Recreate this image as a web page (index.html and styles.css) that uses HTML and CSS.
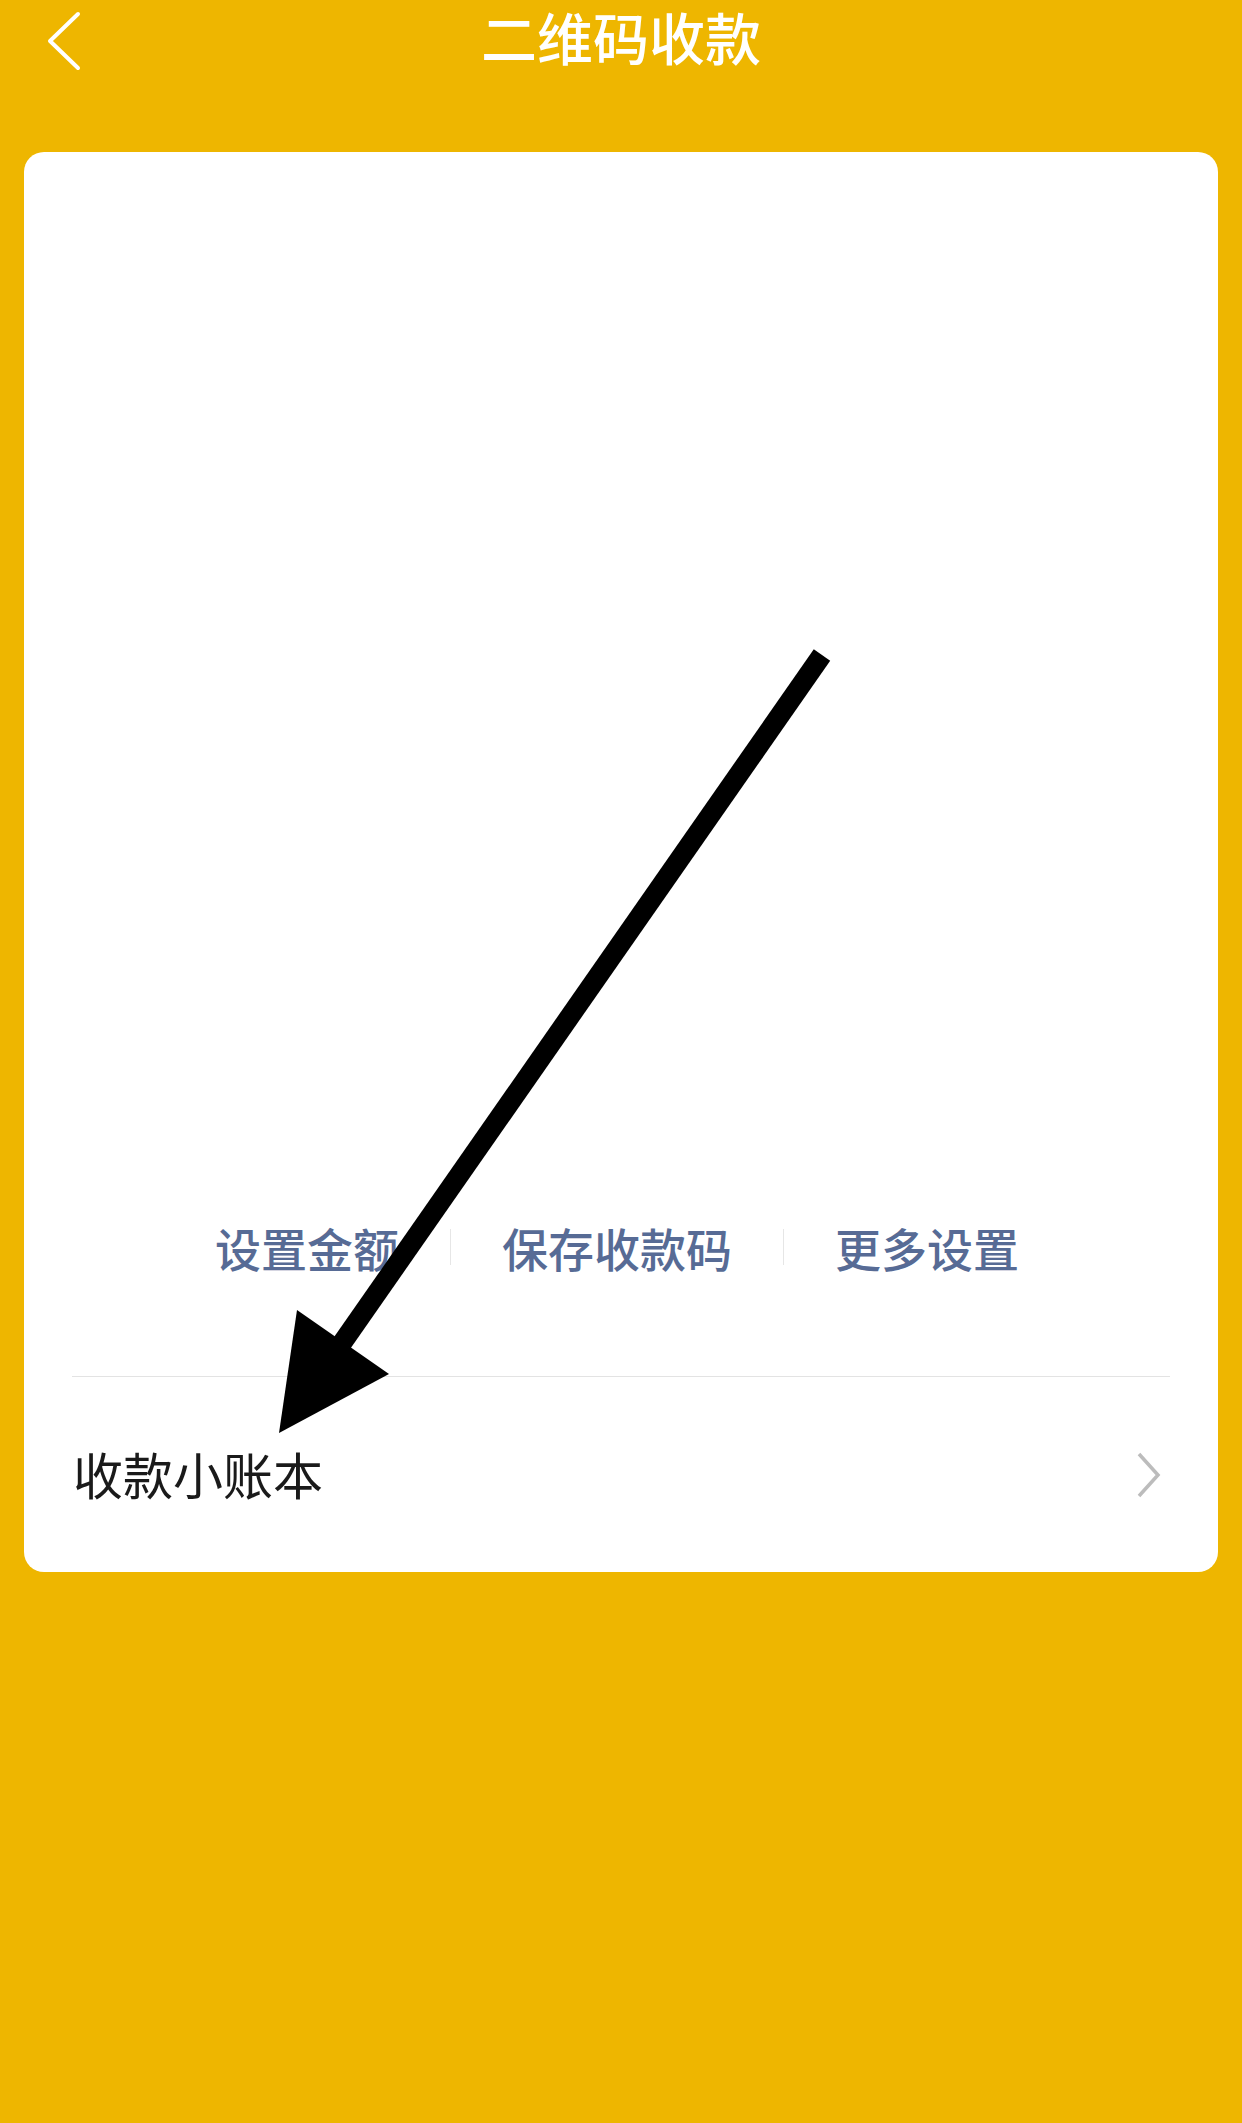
FILE: index.html
```html
<!DOCTYPE html>
<html lang="zh-CN">
<head>
<meta charset="utf-8">
<title>二维码收款</title>
<link rel="stylesheet" href="styles.css">
</head>
<body>
<div class="page">
  <header class="topbar">
    <div class="back">
      <svg width="36" height="60" viewBox="0 0 36 60"><polyline points="31,3 3,30 31,57" fill="none" stroke="#fff" stroke-width="4" stroke-linecap="round" stroke-linejoin="round"/></svg>
    </div>
    <h1 class="title">二维码收款</h1>
    <div class="spacer"></div>
  </header>

  <main class="card">
    <div class="qr-area"></div>
    <nav class="actions">
      <span class="action">设置金额</span>
      <span class="divider"></span>
      <span class="action">保存收款码</span>
      <span class="divider"></span>
      <span class="action">更多设置</span>
    </nav>
    <div class="sep"></div>
    <div class="row">
      <span class="row-label">收款小账本</span>
      <svg class="row-arrow" width="26" height="46" viewBox="0 0 26 46"><polyline points="3,2 22,23 3,44" fill="none" stroke="#bcbcbc" stroke-width="3.5" stroke-linejoin="miter"/></svg>
    </div>
  </main>

  <svg class="annotation" width="1242" height="2123" viewBox="0 0 1242 2123">
    <line x1="822" y1="655" x2="340" y2="1346" stroke="#000" stroke-width="20"/>
    <polygon points="297,1310 389,1374 279,1433" fill="#000"/>
  </svg>
</div>
</body>
</html>
```

FILE: styles.css
```css
* { box-sizing: border-box; }
html, body {
  margin: 0;
  padding: 0;
  background: #eeb600;
}
body {
  font-family: "Noto Sans CJK SC", "Noto Sans", sans-serif;
}
.page {
  position: relative;
  width: 1242px;
  height: 2123px;
  background: #eeb600;
  overflow: hidden;
}
.topbar {
  display: grid;
  grid-template-columns: 1fr auto 1fr;
  align-items: start;
  height: 82px;
}
.back {
  padding-left: 47px;
  display: flex;
  align-items: center;
  height: 82px;
}
.back svg { display: block; margin-top: -1px; }
.title {
  margin: 0;
  color: #fff;
  font-size: 56px;
  font-weight: 500;
  line-height: 72px;
  letter-spacing: 0;
}
.card {
  margin: 70px 24px 0;
  background: #fff;
  border-radius: 20px;
  padding: 0 48px;
}
.qr-area {
  height: 1065px;
}
.actions {
  display: flex;
  justify-content: center;
  align-items: center;
  height: 60px;
  margin-right: 8px;
}
.action {
  color: #576b95;
  font-size: 46px;
  font-weight: 500;
  line-height: 60px;
  padding: 0 51px;
}
.divider {
  width: 1px;
  height: 36px;
  background: #e6e6e6;
}
.sep {
  margin-top: 99px;
  height: 1px;
  background: #e3e3e3;
}
.row {
  display: flex;
  align-items: center;
  justify-content: space-between;
  height: 195px;
  padding-right: 8px;
}
.row-label {
  font-size: 50px;
  color: #1a1a1a;
  line-height: 60px;
  margin-left: 1px;
  margin-top: -4px;
}
.row-arrow { display: block; }
.annotation {
  position: absolute;
  top: 0;
  left: 0;
  pointer-events: none;
}
```
